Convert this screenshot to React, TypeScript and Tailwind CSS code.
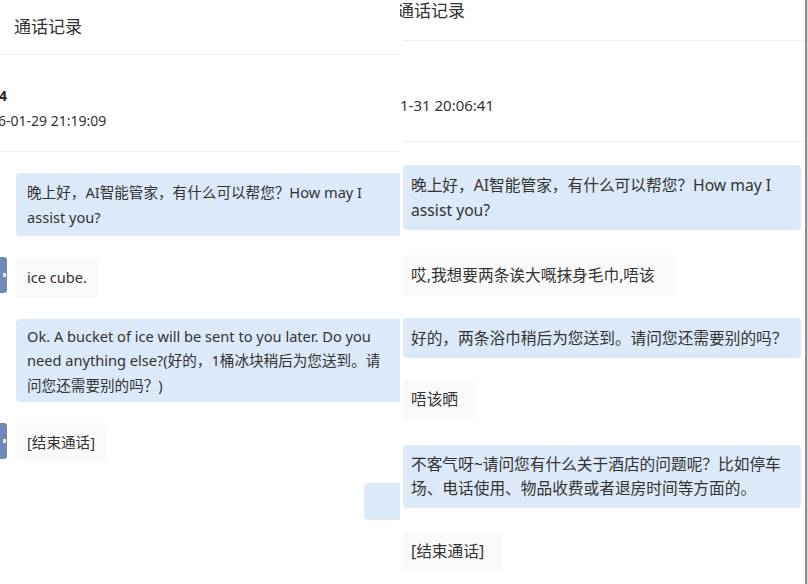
import React from "react";

const F = { fontFamily: '"Noto Sans", "Noto Sans CJK SC", sans-serif' };

function Tab() {
  return (
    <div className="absolute left-0 w-[7px] h-[36px] rounded-r-[3px] bg-[#7189b5] flex items-center justify-end pr-[1px]">
      <div className="w-[3px] h-[4px] bg-white/80" />
    </div>
  );
}

function LeftPanel() {
  return (
    <div className="relative w-[400px] h-[584px] overflow-hidden bg-white text-[#333]">
      <div className="h-[55px] border-b border-[#efefef] pl-[14px] flex items-center">
        <span className="text-[17px] leading-[22px] text-[#333]">通话记录</span>
      </div>
      <div className="h-[97px] border-b border-[#efefef] pt-[28px] text-[14px]">
        <div className="leading-[25px] font-bold text-[#222] -ml-[1px]">4</div>
        <div className="leading-[25px] -ml-[2px]">6-01-29 21:19:09</div>
      </div>
      <div className="relative pt-[21px] flex flex-col gap-[21px] text-[14.6px] leading-[24.5px]">
        <div className="ml-[16px] w-[400px] bg-[#dce9f8] rounded-[4px] pl-[11px] py-[7px]">
          <div className="whitespace-nowrap">晚上好，AI智能管家，有什么可以帮您？How may I</div>
          <div className="whitespace-nowrap">assist you?</div>
        </div>
        <div className="relative flex items-start">
          <Tab />
          <div className="ml-[16px] bg-[#fafafa] rounded-[4px] pl-[11px] pr-[11px] py-[8px]">ice cube.</div>
        </div>
        <div className="ml-[16px] w-[400px] bg-[#dce9f8] rounded-[4px] pl-[11px] py-[5px]">
          <div className="whitespace-nowrap">Ok. A bucket of ice will be sent to you later. Do you</div>
          <div className="whitespace-nowrap">need anything else?(好的，1桶冰块稍后为您送到。请</div>
          <div className="whitespace-nowrap">问您还需要别的吗？)</div>
        </div>
        <div className="relative flex items-start">
          <Tab />
          <div className="ml-[16px] bg-[#fafafa] rounded-[4px] pl-[11px] pr-[11px] py-[7px]">[结束通话]</div>
        </div>
        <div className="flex justify-end">
          <div className="w-[40px] h-[37px] -mr-[4px] bg-[#dce9f8] rounded-[4px]" />
        </div>
      </div>
    </div>
  );
}

function RightPanel() {
  return (
    <div className="relative flex-1 h-[584px] overflow-hidden bg-white text-[#333] flex">
      <div className="flex-1 min-w-0">
        <div className="h-[41px] ml-[3px] border-b border-[#efefef] flex items-start">
          <span className="text-[17px] leading-[22px] text-[#333] -ml-[6px]">通话记录</span>
        </div>
        <div className="h-[101px] ml-[3px] border-b border-[#efefef] pt-[52px] text-[15px]">
          <div className="leading-[24px] -ml-[3px]">1-31 20:06:41</div>
        </div>
        <div className="pt-[23px] pl-[3px] pr-[4px] flex flex-col text-[15.7px] leading-[24.5px]">
          <div className="bg-[#dce9f8] rounded-[4px] pl-[8px] py-[8px]">
            <div className="whitespace-nowrap">晚上好，AI智能管家，有什么可以帮您？How may I</div>
            <div className="whitespace-nowrap">assist you?</div>
          </div>
          <div className="mt-[25px] self-start bg-[#fafafa] rounded-[4px] pl-[8px] pr-[20px] py-[8px] whitespace-nowrap">
            哎,我想要两条诶大嘅抹身毛巾,唔该
          </div>
          <div className="mt-[22px] bg-[#dce9f8] rounded-[4px] pl-[8px] py-[8px] whitespace-nowrap">
            好的，两条浴巾稍后为您送到。请问您还需要别的吗？
          </div>
          <div className="mt-[21px] self-start bg-[#fafafa] rounded-[4px] pl-[8px] pr-[18px] py-[8px] whitespace-nowrap">
            唔该晒
          </div>
          <div className="mt-[25px] bg-[#dce9f8] rounded-[4px] pl-[8px] py-[7px]">
            <div className="whitespace-nowrap">不客气呀~请问您有什么关于酒店的问题呢？比如停车</div>
            <div className="whitespace-nowrap">场、电话使用、物品收费或者退房时间等方面的。</div>
          </div>
          <div className="mt-[23px] self-start bg-[#fafafa] rounded-[4px] pl-[8px] pr-[18px] py-[8px] whitespace-nowrap">
            [结束通话]
          </div>
        </div>
      </div>
      <div className="w-[2px] h-full bg-[#8c8c8c]" />
      <div className="w-[1px] h-full bg-[#d9d9d9]" />
    </div>
  );
}

export default function App() {
  return (
    <div className="w-[808px] h-[584px] flex bg-white overflow-hidden" style={F}>
      <LeftPanel />
      <RightPanel />
    </div>
  );
}
